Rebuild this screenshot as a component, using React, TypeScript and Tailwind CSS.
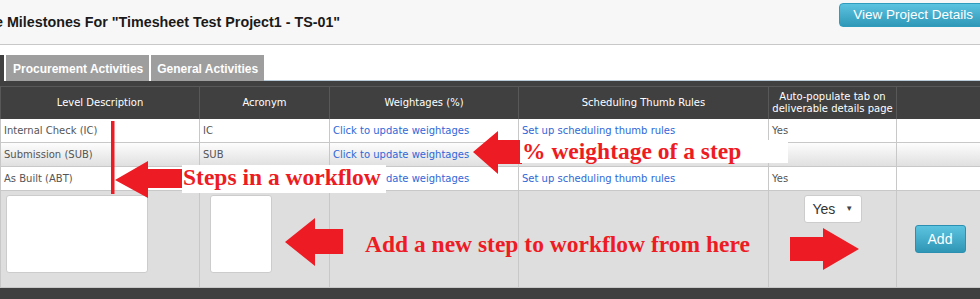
export default function App() {
  const cols = 'grid grid-cols-[199px_130px_189px_250px_128px_1fr] border-l'
  const cell = 'flex items-center border-r border-[#c8c8c8] pl-[3px]'

  const rows = [
    { desc: 'Internal Check (IC)', acr: 'IC', rules: true, auto: 'Yes', shade: false },
    { desc: 'Submission (SUB)', acr: 'SUB', rules: false, auto: '', shade: true },
    { desc: 'As Built (ABT)', acr: 'ABT', rules: true, auto: 'Yes', shade: false },
  ]

  return (
    <div className="relative flex h-[299px] w-[980px] flex-col overflow-hidden bg-white font-['Liberation_Sans',Arial,sans-serif]">
      {/* page header */}
      <div className="flex h-[45px] shrink-0 items-start justify-between border-b border-[#c8c8c8] bg-[#f7f7f7]">
        <h1 className="-ml-[5px] mt-[14px] whitespace-nowrap text-[14.3px] font-bold leading-[17px] text-[#1a1a1a]">
          e Milestones For "Timesheet Test Project1 - TS-01"
        </h1>
        <button className="-mr-[8px] mt-[3px] h-[24px] rounded-[4px] border border-[#2f9bbd] bg-linear-to-b from-[#5bc3e0] to-[#2f98b8] pl-[13px] pr-[14px] text-[13.5px] leading-[20px] text-white">
          View Project Details
        </button>
      </div>

      {/* tabs */}
      <div className="flex h-[36px] shrink-0 items-end">
        <div className="h-[26px] w-[4px] bg-[#404040]" />
        <div className="ml-[2px] h-[26px] bg-[#9e9e9e] pl-[7px] pr-[6px] pt-[7px] text-[12px] font-bold leading-[14px] text-white">
          Procurement Activities
        </div>
        <div className="ml-[2px] h-[26px] bg-[#9e9e9e] pl-[6px] pr-[6px] pt-[7px] text-[12px] font-bold leading-[14px] text-white">
          General Activities
        </div>
        <div className="h-[26px] flex-1 border-b border-[#b9cad8]" />
      </div>
      <div className="h-[5px] shrink-0 bg-[#404040]" />

      {/* table header */}
      <div className={`${cols} h-[33px] shrink-0 border-[#585858] border-t bg-[#404040] font-['DejaVu_Sans',Verdana,sans-serif] text-[10px] leading-[12px] text-white`}>
        <div className="flex items-center justify-center border-r border-[#585858]">Level Description</div>
        <div className="flex items-center justify-center border-r border-[#585858]">Acronym</div>
        <div className="flex items-center justify-center border-r border-[#585858]">Weightages (%)</div>
        <div className="flex items-center justify-center border-r border-[#585858]">Scheduling Thumb Rules</div>
        <div className="flex items-center justify-center border-r border-[#585858] text-center">
          Auto-populate tab on
          <br />
          deliverable details page
        </div>
        <div />
      </div>

      {/* rows */}
      {rows.map((r) => (
        <div
          key={r.acr}
          className={`${cols} h-[24px] shrink-0 border-b border-[#c8c8c8] font-['DejaVu_Sans',Verdana,sans-serif] text-[10px] text-[#555] ${
            r.shade ? 'bg-linear-to-b from-[#fdfdfd] to-[#e0e0e0]' : 'bg-white'
          }`}
        >
          <div className={cell}>{r.desc}</div>
          <div className={cell}>{r.acr}</div>
          <div className={`${cell} text-[#2f67d8]`}>Click to update weightages</div>
          <div className={`${cell} text-[#2f67d8]`}>{r.rules ? 'Set up scheduling thumb rules' : ''}</div>
          <div className={cell}>{r.auto}</div>
          <div />
        </div>
      ))}

      {/* add row */}
      <div className={`${cols} h-[97px] shrink-0 border-b border-[#c8c8c8] bg-[#dedede]`}>
        <div className="border-r border-[#c8c8c8] pl-[5px] pt-[4px]">
          <textarea readOnly className="block h-[78px] w-[142px] resize-none rounded-[3px] border border-[#cccccc] bg-white" />
        </div>
        <div className="border-r border-[#c8c8c8] pl-[10px] pt-[4px]">
          <textarea readOnly className="block h-[78px] w-[62px] resize-none rounded-[3px] border border-[#cccccc] bg-white" />
        </div>
        <div className="border-r border-[#c8c8c8]" />
        <div className="border-r border-[#c8c8c8]" />
        <div className="flex justify-center border-r border-[#c8c8c8] pt-[4px]">
          <div className="flex h-[28px] w-[58px] items-center rounded-[3px] border border-[#cccccc] bg-white pl-[8px] text-[14px] text-[#333]">
            <span>Yes</span>
            <span className="ml-[10px] text-[8px] text-[#444]">▼</span>
          </div>
        </div>
        <div className="flex items-center justify-center pl-[3px]">
          <button className="h-[28px] w-[51px] rounded-[3px] border border-[#2a8fb0] bg-linear-to-b from-[#5bc3e0] to-[#2f96b6] text-[14px] text-white">
            Add
          </button>
        </div>
      </div>
      <div className="flex-1 bg-[#404040]" />

      {/* annotations */}
      <svg className="pointer-events-none absolute inset-0" width="980" height="299" viewBox="0 0 980 299">
        <rect x="111" y="121" width="3.5" height="73" fill="#ed1c24" />
        <polygon points="115,180 148,161 148,169 183,169 183,188 148,188 148,198" fill="#ed1c24" />
        <polygon points="473,152 498,131 498,140 522,140 522,164 498,164 498,174" fill="#ed1c24" />
        <polygon points="285,242 315,218 315,229 343,229 343,254 315,254 315,266" fill="#ed1c24" />
        <polygon points="790,237 823,237 823,228 859,249 823,270 823,261 790,261" fill="#ed1c24" />
      </svg>
      <div className="absolute left-[182px] top-[165px] h-[28px] w-[204px] bg-white pl-px pt-[1px] font-['Liberation_Serif','Times_New_Roman',serif] text-[23.5px] font-bold leading-none whitespace-nowrap text-[#ed1c24]">
        Steps in a workflow
      </div>
      <div className="absolute left-[520px] top-[140px] h-[23px] w-[268px] bg-white pl-[2px] font-['Liberation_Serif','Times_New_Roman',serif] text-[23.5px] font-bold leading-none whitespace-nowrap text-[#ed1c24]">
        % weightage of a step
      </div>
      <div className="absolute left-[365px] top-[233px] font-['Liberation_Serif','Times_New_Roman',serif] text-[23.5px] font-bold leading-none whitespace-nowrap text-[#ed1c24]">
        Add a new step to workflow from here
      </div>
    </div>
  )
}
